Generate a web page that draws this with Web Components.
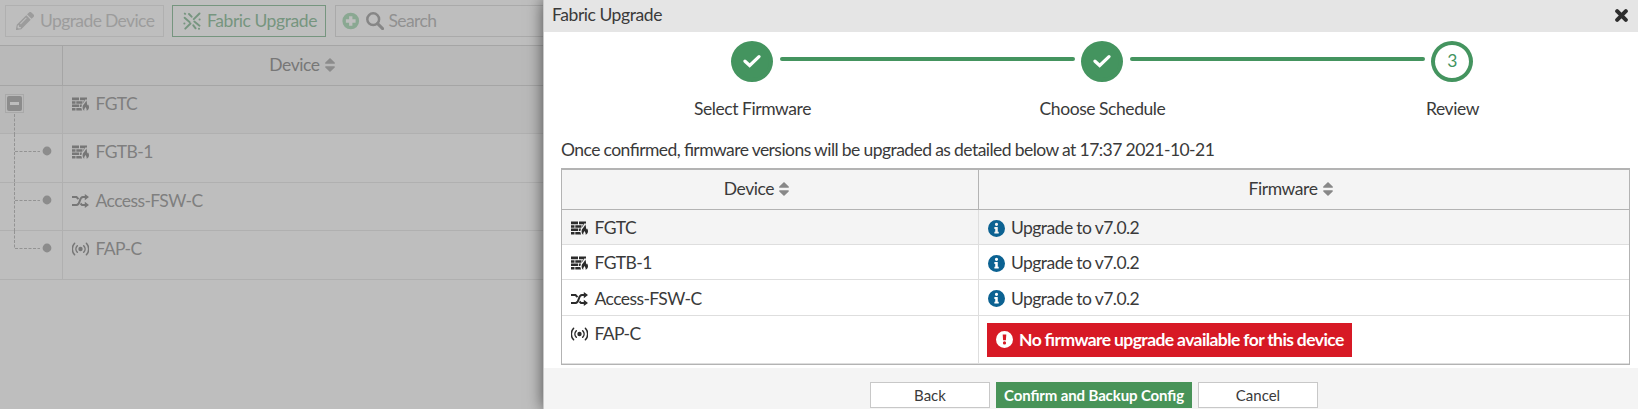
<!DOCTYPE html>
<html lang="en">
<head>
<meta charset="utf-8">
<title>Fabric Upgrade</title>
<style>
html,body{margin:0;height:100%;overflow:hidden}
body{font-family:Lato,"Open Sans",sans-serif;font-weight:400;font-size:17.5px;line-height:24px;letter-spacing:-.42px;word-spacing:-.2px;font-feature-settings:"liga" 1,"kern" 1;color:#3a3a3a;background:#bebebe}
</style>
</head>
<body>
<fabric-app></fabric-app>
<script>
const ICONS = {
  pencil: ['0 0 512 512', '<path d="M498 142l-46 46a12 12 0 0 1-17 0L324 77a12 12 0 0 1 0-17l46-46a48 48 0 0 1 68 0l60 60a48 48 0 0 1 0 68zM284 100L22 362 0 484a24 24 0 0 0 28 28l122-22 262-262a12 12 0 0 0 0-17L301 100a12 12 0 0 0-17 0zM124 340a14 14 0 0 1 0-20l154-154a14 14 0 0 1 20 20L144 340a14 14 0 0 1-20 0zM88 424h48v36l-64 12-32-32 12-64h36z"/>'],
  fabric: ['0 0 18 18', '<g stroke="currentColor" stroke-width="1.900" stroke-linecap="round"><path d="M1.600 5.800l4.900 4.200M16.500 1.500L10.800 7.200M7.500 11.500L2.300 16.700M11.300 9.500l5.200 4.200M6 2l2.600 2.700M10.300 13.300l2.300 3M1.800 1.600l.3.300M1.300 11.500h.2M16.500 7.500h.2M15.900 16.700h.2"/></g>'],
  plus: ['0 0 18 18', '<path fill-rule="evenodd" d="M9 .4a8.6 8.6 0 1 0 0 17.2A8.6 8.6 0 0 0 9 .4zM7.3 4h3.400v3.300H14v3.400h-3.300V14H7.300v-3.300H4V7.300h3.300z"/>'],
  search: ['0 0 18 18', '<circle cx="7.200" cy="7.200" r="5.900" fill="none" stroke="currentColor" stroke-width="2.500"/><path d="M11.600 11.600l5 5" stroke="currentColor" stroke-width="2.900" stroke-linecap="round"/>'],
  sort: ['0 0 10 14', '<path d="M5 0L9.700 4.500Q10.300 5.700 9 5.700H1Q-.3 5.700 .3 4.500zM5 14L.3 9.500Q-.3 8.300 1 8.300H9Q10.300 8.300 9.700 9.500z"/>'],
  firewall: ['0 0 17 14', '<path d="M0 .5h7v2.800H0zM8 .5h7v2.200l-1.300-.4L12.500 4 12 3.300H8zM0 4.200h3.500v2.600H0zM4.300 4.200h6.200v2.600H4.300zM11.300 4.200h1.200l-1.200 2zM0 7.500h7v2.600H0zM7.800 7.500h2.200l-.6 2.600H7.800zM0 10.900h3.500v2.600H0zM4.300 10.900h5l.8 2.600H4.300z"/><path d="M14.200 3.300c-.2 2.600-3.600 4.100-3.600 7.100 0 1.500.7 2.700 1.700 3.300-.3-1.600.4-2.600 1.500-3.700.1 1.500 1.300 2.100.8 3.700 1.300-.6 2.400-1.800 2.400-3.300 0-1.500-.6-2.500-1.200-3.100-.1.700-.4 1.100-.8 1.300.2-2-.1-3.700-.8-5.300z"/>'],
  shuffle: ['0 0 17 14', '<g fill="none" stroke="currentColor" stroke-width="2"><path d="M0 3h4.500L6.500 5.200M0 11h4.500C9 11 6.500 3 11 3h3M8.500 9.500L10 11H14"/></g><path d="M12.800 0L17 3l-4.200 3.200zM12.800 7.800L17 11l-4.200 3z"/>'],
  ap: ['0 0 17 14', '<circle cx="8.500" cy="7" r="2.200"/><g fill="none" stroke="currentColor" stroke-width="1.500" stroke-linecap="round"><path d="M5.300 3.700a4.700 4.700 0 0 0 0 6.600M11.700 3.700a4.700 4.700 0 0 1 0 6.600M2.600 1.200a8.500 8.500 0 0 0 0 11.600M14.400 1.200a8.500 8.500 0 0 1 0 11.600"/></g>'],
  info: ['0 0 16 16', '<path fill-rule="evenodd" d="M8 0a8 8 0 1 0 0 16A8 8 0 0 0 8 0zM8 2.600a1.500 1.500 0 1 1 0 3 1.500 1.500 0 0 1 0-3zM6 6.700h3.200v4.300h.9v1.700H6V11h.8V8.400H6z"/>'],
  alert: ['0 0 17 17', '<path fill-rule="evenodd" d="M8.500 0a8.500 8.500 0 1 0 0 17 8.500 8.500 0 0 0 0-17zM6.700 3.400h3.600L9.900 9.300H7.100zM8.500 10.300a1.600 1.600 0 1 1 0 3.200 1.600 1.600 0 0 1 0-3.200z"/>'],
  check: ['0 0 18 14', '<path d="M2 7.200l4.700 4.300L16 2.600" fill="none" stroke="currentColor" stroke-width="3.200" stroke-linecap="round"/>'],
  close: ['0 0 12 12', '<path d="M2 2l8 8M10 2l-8 8" stroke="currentColor" stroke-width="3.700" stroke-linecap="round"/>']
};
function define(name, css, html, setup) {
  const t = document.createElement('template');
  t.innerHTML = `<style>*{box-sizing:border-box}${css}</style>${html}`;
  customElements.define(name, class extends HTMLElement {
    constructor() {
      super();
      this.attachShadow({mode: 'open'}).append(t.content.cloneNode(true));
    }
    connectedCallback() { if (setup) setup(this, this.shadowRoot); }
  });
}
define('ui-icon', ':host{display:inline-block;flex:none}svg{display:block;width:100%;height:100%;fill:currentColor}', '<svg aria-hidden="true"></svg>', (el, root) => {
  const [box, body] = ICONS[el.getAttribute('name')];
  const svg = root.querySelector('svg');
  svg.setAttribute('viewBox', box);
  svg.innerHTML = body;
});
define('tool-button', `
:host{box-sizing:border-box;display:flex;align-items:center;height:32px;border:1px solid currentColor;padding:0 0 1px 10px;gap:6px;white-space:nowrap}
#i{display:flex}ui-icon{width:18px;height:18px}:host([disabled]){color:#9c9c9c;border-color:#b0b0b0;letter-spacing:-.6px}`,
'<span id="i"></span><slot></slot>', (el, root) => {
  root.querySelector('#i').innerHTML = `<ui-icon name="${el.getAttribute('icon')}"></ui-icon>`;
});
define('sort-head', ':host{display:flex;align-items:center;justify-content:center;gap:5px}ui-icon{width:10px;height:14px;color:var(--sort,#888)}',
  '<slot></slot><ui-icon name="sort"></ui-icon>');
define('device-label', ':host{display:flex;align-items:center;gap:6.500px;white-space:nowrap;letter-spacing:-.58px}#i{display:flex;color:var(--icon,#2b2b2b)}ui-icon{width:17px;height:14px}',
  '<span id="i"></span><slot></slot>', (el, root) => {
  root.querySelector('#i').innerHTML = `<ui-icon name="${el.getAttribute('icon')}"></ui-icon>`;
});
define('tree-mark', `
:host{display:block;height:100%}
svg{display:block;width:62px;height:100%;overflow:visible}
.d{stroke:#939393;stroke-width:1;stroke-dasharray:3 1.500;fill:none}`,
'<svg></svg>', (el, root) => {
  const k = el.getAttribute('kind');
  root.querySelector('svg').innerHTML = k === 'root'
    ? '<rect x="5.500" y="8.500" width="18" height="18" fill="none" stroke="#a9a9a9"/><rect x="7" y="10" width="15" height="15" rx="2" fill="#8c8c8c"/><rect x="10" y="16" width="9" height="3" fill="#bdbdbd"/><path class="d" d="M14.500 28V48"/>'
    : `<path class="d" d="M14.500 0V${k === 'last' ? 17.500 : 49}M15 17.500H40"/><circle cx="47" cy="17" r="4.400" fill="#8c8c8c"/>`;
});
define('device-tree', `
:host{display:grid;grid-template-columns:63px 1fr;grid-template-rows:40px 48px 49px 48px 49px;color:#777;--sort:#8c8c8c;--icon:#777}
.c{border-bottom:1px solid #b0b0b0}.m{border-right:1px solid #b0b0b0}
.h{background:rgba(0,0,0,.022);border-color:#a5a5a5}.r{background:rgba(0,0,0,.022)}
sort-head{padding:0 2px 2px 0}
device-label{color:#7f7f7f;padding:1px 0 0 9px;height:34px}`,
`<div class="c m h"></div><sort-head class="c h">Device</sort-head>
<div class="c m r"><tree-mark kind="root"></tree-mark></div><div class="c r"><device-label icon="firewall">FGTC</device-label></div>
<div class="c m"><tree-mark></tree-mark></div><div class="c"><device-label icon="firewall">FGTB-1</device-label></div>
<div class="c m"><tree-mark></tree-mark></div><div class="c"><device-label icon="shuffle">Access-FSW-C</device-label></div>
<div class="c m"><tree-mark kind="last"></tree-mark></div><div class="c"><device-label icon="ap">FAP-C</device-label></div>`);
define('device-page', `
:host{display:block;width:543px;height:409px;background:#bebebe}
.bar{display:flex;height:46px;padding:5px 0 0 5px;border-bottom:1px solid #a5a5a5}
.up{width:159px;margin-right:8px}.fab{width:154px;margin-right:9px;color:#76957f}
.search{display:flex;flex:1;height:32px;align-items:center;gap:6px;border:1px solid #aaa;border-right:0;padding:0 0 1px 6px;color:#919191;letter-spacing:-.6px}
.search ui-icon{width:18px;height:18px}.search .p{width:17.500px;color:#8aa892}.search .s{color:#868686;margin-right:-1px}`,
`<div class="bar"><tool-button class="up" icon="pencil" disabled>Upgrade Device</tool-button><tool-button class="fab" icon="fabric">Fabric Upgrade</tool-button>
<div class="search"><ui-icon class="p" name="plus"></ui-icon><ui-icon class="s" name="search"></ui-icon><span>Search</span></div></div>
<device-tree></device-tree>`);
define('wizard-step', `
:host{display:grid;grid-template-columns:1fr 42px 1fr;height:92px;width:350px;grid-template-rows:51px 1fr;text-align:center}
.dot{width:42px;height:41px;margin-top:9px;border:4px solid #44945f;border-radius:50%;display:flex;align-items:center;justify-content:center;color:#44945f;padding-bottom:1px}
:host([done]) .dot{background:#44945f;color:#fff}
ui-icon{width:18px;height:14px}
.l{height:4px;background:#44945f;margin-top:25px}
.a{border-radius:0 2px 2px 0;margin-right:6px}.b{border-radius:2px 0 0 2px;margin-left:7px}
:host([first]) .a,:host([last]) .b{visibility:hidden}
.t{grid-column:1/4;padding:14px 0 0 1px}`,
'<i class="l a"></i><div class="dot"></div><i class="l b"></i><div class="t"><slot></slot></div>', (el, root) => {
  root.querySelector('.dot').innerHTML = el.hasAttribute('done') ? '<ui-icon name="check"></ui-icon>' : el.getAttribute('num');
});
define('status-note', `
:host{box-sizing:border-box;display:flex;align-items:center;gap:6px;white-space:nowrap;letter-spacing:-.55px}
#i{display:flex;color:#0c6292}ui-icon{width:17px;height:17px}
:host([bad]){background:#d71925;color:#fff;font-weight:700;width:365px;height:34px;padding:0 0 1px 9px;gap:6px;letter-spacing:-.58px}
:host([bad]) #i{color:#fff}`,
'<span id="i"></span><slot></slot>', (el, root) => {
  root.querySelector('#i').innerHTML = `<ui-icon name="${el.hasAttribute('bad') ? 'alert' : 'info'}"></ui-icon>`;
});
define('upgrade-table', `
:host{box-sizing:border-box;display:grid;width:1069px;grid-template-columns:417px 1fr;grid-template-rows:40px 35px 35px 36px 48px;border:1px solid #b3b3b3;border-top-width:2px}
.c{border-bottom:1px solid #dedede}.m{border-right:1px solid #dedede}
.h{background:#f4f4f4;border-bottom-color:#b3b3b3}.h.m{border-right-color:#b3b3b3}.r{background:#f4f4f4}
sort-head{padding:0 27px 1px 0}
device-label{padding:2px 0 0 9px}status-note:not([bad]){padding:2px 0 0 9px}
.x{padding-bottom:13px}.n{padding:7px 0 0 8px}`,
`<sort-head class="c m h">Device</sort-head><sort-head class="c h">Firmware</sort-head>
<device-label class="c m r" icon="firewall">FGTC</device-label><status-note class="c r">Upgrade to v7.0.2</status-note>
<device-label class="c m" icon="firewall">FGTB-1</device-label><status-note class="c">Upgrade to v7.0.2</status-note>
<device-label class="c m" icon="shuffle">Access-FSW-C</device-label><status-note class="c">Upgrade to v7.0.2</status-note>
<device-label class="c m x" icon="ap">FAP-C</device-label><div class="c n"><status-note bad>No firmware upgrade available for this device</status-note></div>`);
define('dialog-button', `
:host{box-sizing:border-box;display:flex;align-items:center;justify-content:center;width:120px;height:26px;background:#fff;border:1px solid #c8c8c8;font-size:15px;letter-spacing:0;word-spacing:0;white-space:nowrap}
:host([primary]){width:196px;background:#489358;border-color:#489358;color:#fff;font-weight:700;letter-spacing:-.12px}`, '<slot></slot>');
define('upgrade-dialog', `
:host{box-sizing:border-box;position:relative;display:flex;flex-direction:column;width:1095px;height:409px;background:#fff;border-left:1px solid #c9c9c9;box-shadow:0 0 15px rgba(0,0,0,.6)}
header{display:flex;justify-content:space-between;align-items:center;height:32px;background:#e5e5e5;padding:0 10px 2px 8px;flex:none}
header ui-icon{width:13px;height:13px;color:#2d2d2d}
.steps{display:flex;padding-left:33px;height:100px;flex:none}
p{margin:0;padding:6px 0 0 17px;height:36px;flex:none;letter-spacing:-.55px}
upgrade-table{margin-left:17px;flex:none}
footer{display:flex;justify-content:center;gap:6px;background:#f4f4f4;flex:1;margin-top:3px;padding:14px 0 0 6px}`,
`<header><span>Fabric Upgrade</span><ui-icon name="close"></ui-icon></header>
<div class="steps"><wizard-step done first>Select Firmware</wizard-step><wizard-step done>Choose Schedule</wizard-step><wizard-step last num="3">Review</wizard-step></div>
<p><span>Once confirmed, firmware versions will be upgraded as detailed below at 17:37 2021-10-21</span></p>
<upgrade-table></upgrade-table>
<footer><dialog-button>Back</dialog-button><dialog-button primary>Confirm and Backup Config</dialog-button><dialog-button>Cancel</dialog-button></footer>`);
define('fabric-app', ':host{display:flex;width:1638px;height:409px;overflow:hidden}device-page,upgrade-dialog{flex:none}', '<device-page></device-page><upgrade-dialog></upgrade-dialog>');
</script>
</body>
</html>
